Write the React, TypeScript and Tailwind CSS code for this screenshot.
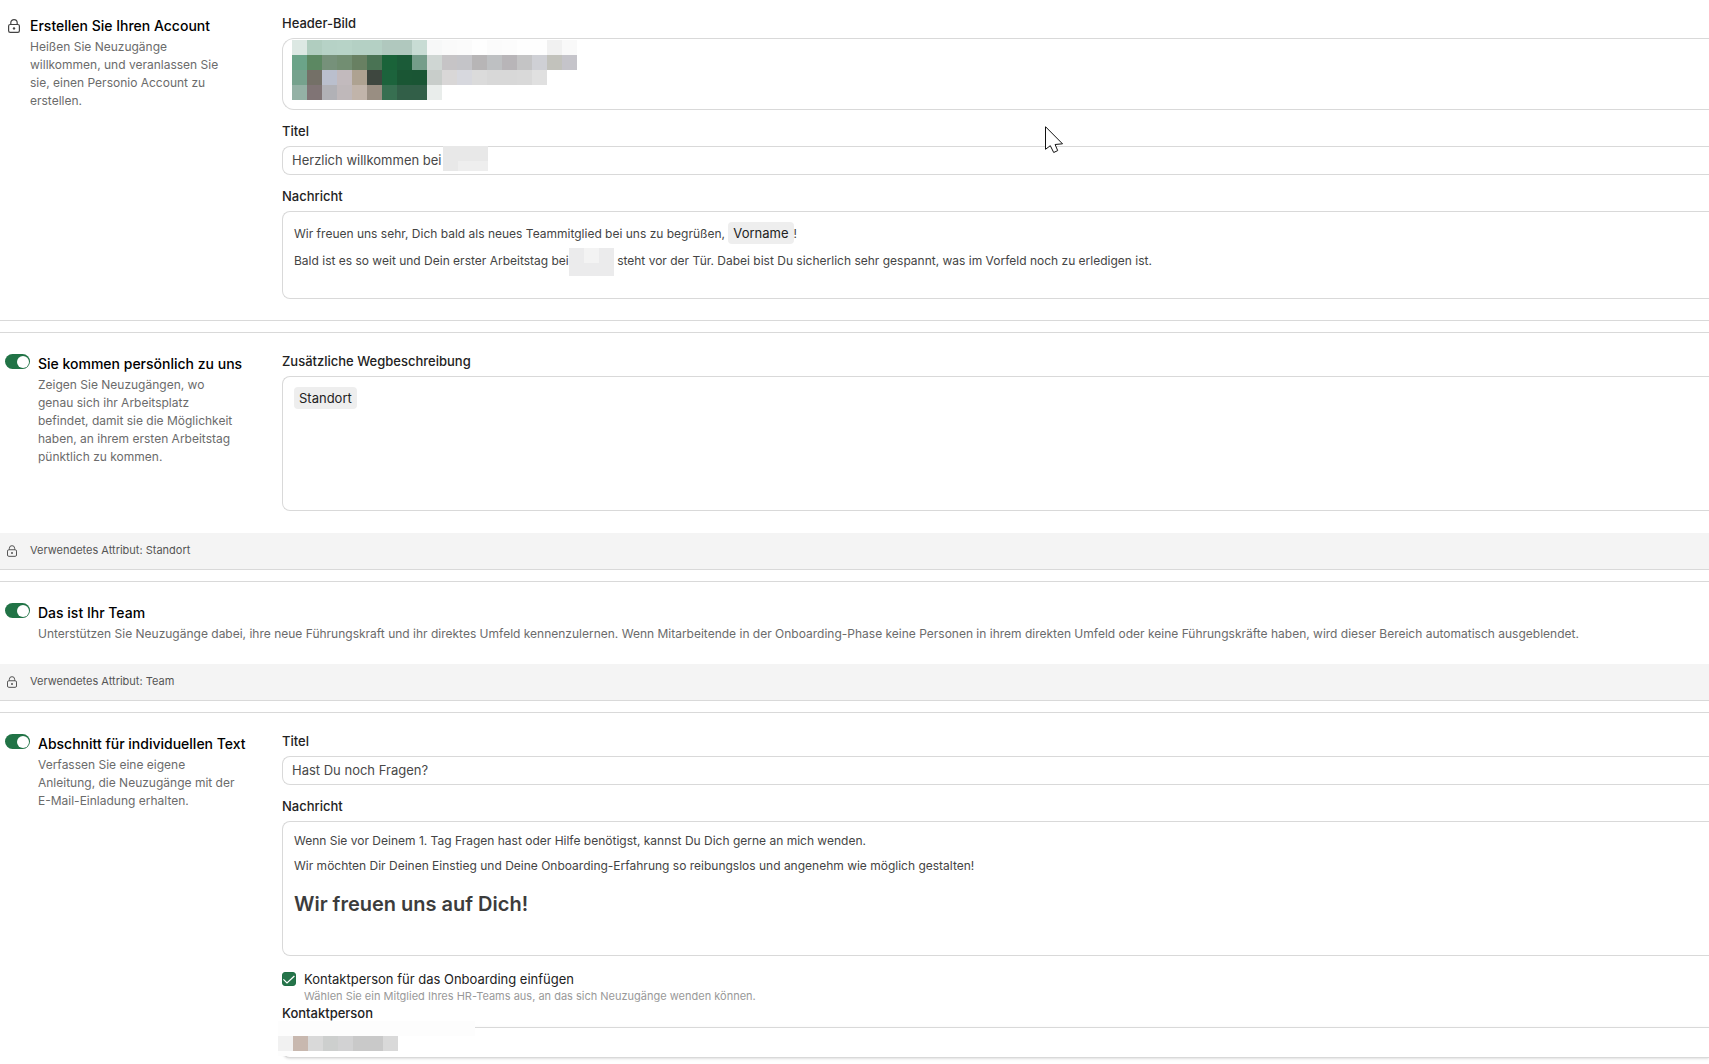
import { useId, useState, type ReactNode } from "react";

const BANNER: string[][] = [
  ["#dce8e3", "#b0cdbf", "#b6d2c6", "#b7d3c7", "#b4d0c4", "#b4d0c4", "#b0c8be", "#b0c8be", "#c8dcd4", "#f7f8f8", "#fafafa", "#fbfbfb", "#fefefe", "#fbfbfb", "#fcfcfc", "#fefefe", "#fefefe", "#f1f1f1", "#f9f9f9"],
  ["#6ba489", "#5c8862", "#76917a", "#728e72", "#688062", "#4a7354", "#1a6339", "#1b5b38", "#759d8a", "#cfd6d3", "#c6c4c6", "#c4c4c8", "#b7b5b6", "#bec0c2", "#b8b5b8", "#c4c4c5", "#cfd0d5", "#c2c2bc", "#c5c4ca"],
  ["#76a28d", "#747067", "#babfcd", "#c2babd", "#aea291", "#3e473f", "#1c633c", "#1a5634", "#1a5534", "#c8cdca", "#d9d7d7", "#d7d8de", "#dbdbdb", "#d8d8d8", "#d8d8d8", "#d9d9d9", "#e0e0e0", "", ""],
  ["#94b1a5", "#807475", "#b1b1b6", "#bfb8ba", "#c1b4aa", "#998e82", "#376f51", "#325f48", "#325f48", "#e9edeb", "", "", "", "", "", "", "", "", ""],
];

function LockIcon({ className }: { className: string }) {
  return (
    <svg viewBox="0 0 12 14" className={className} fill="none" stroke="currentColor" aria-hidden="true">
      <rect x="0.6" y="5.5" width="10.8" height="7.9" rx="1.6" strokeWidth="1.2" />
      <path d="M2.8 5.5V3.8a3.2 3.2 0 0 1 6.4 0v1.7" strokeWidth="1.2" />
      <circle cx="6" cy="9.4" r="1.2" fill="currentColor" stroke="none" />
    </svg>
  );
}

function Toggle({ label }: { label: string }) {
  const [on, setOn] = useState(true);
  return (
    <button
      type="button"
      role="switch"
      aria-checked={on}
      aria-label={label}
      onClick={() => setOn(!on)}
      className={`flex h-[15px] w-[25px] shrink-0 items-center rounded-full px-px ${on ? "justify-end bg-[#217346]" : "justify-start bg-gray-400"}`}
    >
      <span className="size-3 rounded-full bg-white" />
    </button>
  );
}

function Intro({ title, children, locked }: { title: string; children: ReactNode; locked?: boolean }) {
  return (
    <div className={`flex items-start ${locked ? "gap-[10px] pl-2" : "gap-2 pl-[5px]"}`}>
      {locked ? <LockIcon className="mt-[3px] h-[14px] w-3 shrink-0 text-[#444]" /> : <Toggle label={title} />}
      <div className="min-w-0">
        <h2 className="whitespace-nowrap text-[14px] font-medium leading-5 text-black">{title}</h2>
        <p className="mt-0.5 text-[12px] leading-[18px] text-[#6b6b6b]">{children}</p>
      </div>
    </div>
  );
}

function Split({ intro, children }: { intro: ReactNode; children: ReactNode }) {
  return (
    <div className="flex items-start">
      <div className="w-[282px] shrink-0 pr-11 pt-0.5">{intro}</div>
      <div className="flex min-w-0 flex-1 flex-col gap-3">{children}</div>
    </div>
  );
}

const LABEL = "text-[13px] font-medium leading-[18px] text-[#222]";
const BOX = "border border-r-0 border-[#d9d9d9] bg-white";

function TextField({ label, value, redacted }: { label: string; value: string; redacted?: boolean }) {
  const id = useId();
  return (
    <div className="flex flex-col gap-1.5">
      <label htmlFor={id} className={LABEL}>{label}</label>
      <div className="relative">
        <input
          id={id}
          defaultValue={value}
          className={`${BOX} block h-[29px] w-full rounded-l-lg pb-0.5 pl-[9px] text-[13px] leading-[18px] text-[#484848] outline-none`}
        />
        {redacted && (
          <span className="absolute left-[161px] top-0 h-[25px] w-[45px] bg-[#e8e8e8]">
            <span className="absolute bottom-0 right-0 h-[10px] w-[30px] bg-[#eeeeee]" />
          </span>
        )}
      </div>
    </div>
  );
}

function Editor({ label, tall, children }: { label: string; tall?: boolean; children: ReactNode }) {
  const id = useId();
  return (
    <div className="flex flex-col gap-1.5">
      <span id={id} className={LABEL}>{label}</span>
      <div
        role="textbox"
        aria-multiline="true"
        aria-labelledby={id}
        tabIndex={0}
        className={`${BOX} flex flex-col gap-[7px] rounded-l-lg py-[10px] pl-[11px] text-[12px] leading-[18px] text-[#444] ${tall ? "min-h-[135px]" : "min-h-[88px]"}`}
      >
        {children}
      </div>
    </div>
  );
}

function Chip({ children }: { children: ReactNode }) {
  return <span className="inline-block rounded bg-[#eeeeee] px-[5px] text-[13px] leading-[22px] text-[#222]">{children}</span>;
}

function AttributeBar({ children }: { children: ReactNode }) {
  return (
    <div className="flex h-9 items-center gap-[13px] bg-[#f4f4f4] pl-[7px] text-[11px] leading-4 text-[#555]">
      <LockIcon className="h-3 w-[10px] shrink-0" />
      <span className="pb-0.5">{children}</span>
    </div>
  );
}

export default function App() {
  const pickerId = useId();
  const checkId = useId();
  return (
    <main className="relative flex flex-col gap-[11px] overflow-hidden bg-white font-['Inter',sans-serif]">
      <section className="border-b border-[#d9d9d9] pb-[21px] pt-[14px]">
        <Split
          intro={
            <Intro title="Erstellen Sie Ihren Account" locked>
              Heißen Sie Neuzugänge willkommen, und veranlassen Sie sie, einen Personio Account zu erstellen.
            </Intro>
          }
        >
          <div className="flex flex-col gap-1.5">
            <span className={LABEL}>Header-Bild</span>
            <div className={`${BOX} h-[72px] rounded-l-xl pl-[9px] pt-px`}>
              <svg width="285" height="60" viewBox="0 0 19 4" shapeRendering="crispEdges" role="img" aria-label="Header-Bild">
                {BANNER.map((row, y) =>
                  row.map((fill, x) => fill && <rect key={`${x}-${y}`} x={x} y={y} width="1" height="1" fill={fill} />),
                )}
              </svg>
            </div>
          </div>
          <TextField label="Titel" value="Herzlich willkommen bei" redacted />
          <Editor label="Nachricht">
            <p className="leading-[22px]">
              Wir freuen uns sehr, Dich bald als neues Teammitglied bei uns zu begrüßen, <Chip>Vorname</Chip>!
            </p>
            <p>
              Bald ist es so weit und Dein erster Arbeitstag bei
              <span className="relative -my-1.5 inline-block h-7 w-[45px] bg-[#ebebec] align-middle">
                <span className="absolute left-[15px] top-0 size-[15px] bg-[#f3f3f3]" />
              </span>{" "}
              steht vor der Tür. Dabei bist Du sicherlich sehr gespannt, was im Vorfeld noch zu erledigen ist.
            </p>
          </Editor>
        </Split>
      </section>

      <section className="border-y border-[#d9d9d9]">
        <div className="pb-[22px] pt-[19px]">
          <Split
            intro={
              <Intro title="Sie kommen persönlich zu uns">
                Zeigen Sie Neuzugängen, wo genau sich ihr Arbeitsplatz befindet, damit sie die Möglichkeit haben, an
                ihrem ersten Arbeitstag pünktlich zu kommen.
              </Intro>
            }
          >
            <Editor label="Zusätzliche Wegbeschreibung" tall>
              <p className="leading-[22px]"><Chip>Standort</Chip></p>
            </Editor>
          </Split>
        </div>
        <AttributeBar>Verwendetes Attribut: Standort</AttributeBar>
      </section>

      <section className="border-y border-[#d9d9d9]">
        <div className="py-[21px]">
          <Intro title="Das ist Ihr Team">
            Unterstützen Sie Neuzugänge dabei, ihre neue Führungskraft und ihr direktes Umfeld kennenzulernen. Wenn
            Mitarbeitende in der Onboarding-Phase keine Personen in ihrem direkten Umfeld oder keine Führungskräfte
            haben, wird dieser Bereich automatisch ausgeblendet.
          </Intro>
        </div>
        <AttributeBar>Verwendetes Attribut: Team</AttributeBar>
      </section>

      <section className="border-t border-[#d9d9d9] pb-1.5 pt-[19px]">
        <Split
          intro={
            <Intro title="Abschnitt für individuellen Text">
              Verfassen Sie eine eigene Anleitung, die Neuzugänge mit der E-Mail-Einladung erhalten.
            </Intro>
          }
        >
          <TextField label="Titel" value="Hast Du noch Fragen?" />
          <Editor label="Nachricht" tall>
            <p>Wenn Sie vor Deinem 1. Tag Fragen hast oder Hilfe benötigst, kannst Du Dich gerne an mich wenden.</p>
            <p>Wir möchten Dir Deinen Einstieg und Deine Onboarding-Erfahrung so reibungslos und angenehm wie möglich gestalten!</p>
            <h3 className="mt-2 text-[20px] font-semibold leading-7 text-[#3c3c3c]">Wir freuen uns auf Dich!</h3>
          </Editor>
          <div className="flex flex-col">
            <div className="flex items-start gap-2 pt-0.5">
              <span className="relative mt-0.5 size-[14px] shrink-0">
                <input
                  id={checkId}
                  type="checkbox"
                  defaultChecked
                  className="peer block size-[14px] appearance-none rounded-[3px] border border-[#1f6f45] checked:bg-[#25744a]"
                />
                <svg viewBox="0 0 14 14" className="pointer-events-none absolute inset-0 hidden peer-checked:block" fill="none" stroke="#fff" strokeWidth="1.2" aria-hidden="true">
                  <path d="M1.4 7.4 5 11 12.4 4" />
                </svg>
              </span>
              <div>
                <label htmlFor={checkId} className="block text-[13px] leading-[18px] text-[#222]">
                  Kontaktperson für das Onboarding einfügen
                </label>
                <p className="text-[11px] leading-4 text-[#999]">
                  Wählen Sie ein Mitglied Ihres HR-Teams aus, an das sich Neuzugänge wenden können.
                </p>
              </div>
            </div>
            <div className="flex flex-col gap-[5px]">
              <label htmlFor={pickerId} className={LABEL}>Kontaktperson</label>
              <div className="relative">
                <select id={pickerId} className={`${BOX} block h-[31px] w-full appearance-none rounded-l-lg shadow-sm`} />
                <span className="absolute -left-1 -top-1.5 h-[15px] w-[197px] bg-[#fdfdfd]" />
                <svg className="absolute -left-1 top-[9px]" width="120" height="20" shapeRendering="crispEdges" aria-hidden="true">
                  <rect width="12" height="20" fill="#fdfdfd" />
                  {["#f1f1f1", "#c8b8af", "#d9d9d9", "#cdcfce", "#d2d2d3", "#c9c9c9", "#c9c9c9", "#d9d9d9"].map((fill, i) => (
                    <rect key={i} x={i * 15} width="15" height="15" fill={fill} />
                  ))}
                </svg>
              </div>
            </div>
          </div>
        </Split>
      </section>

      <svg className="pointer-events-none absolute left-[1045px] top-[126px]" width="19" height="28" viewBox="0 0 19 28" aria-hidden="true">
        <path d="M.5.7v22.6l4.8-3.6 3.4 6.8 4-1.9-2.6-6.1 7.4-.7z" fill="#fff" stroke="#111" strokeWidth="1" />
      </svg>
    </main>
  );
}
